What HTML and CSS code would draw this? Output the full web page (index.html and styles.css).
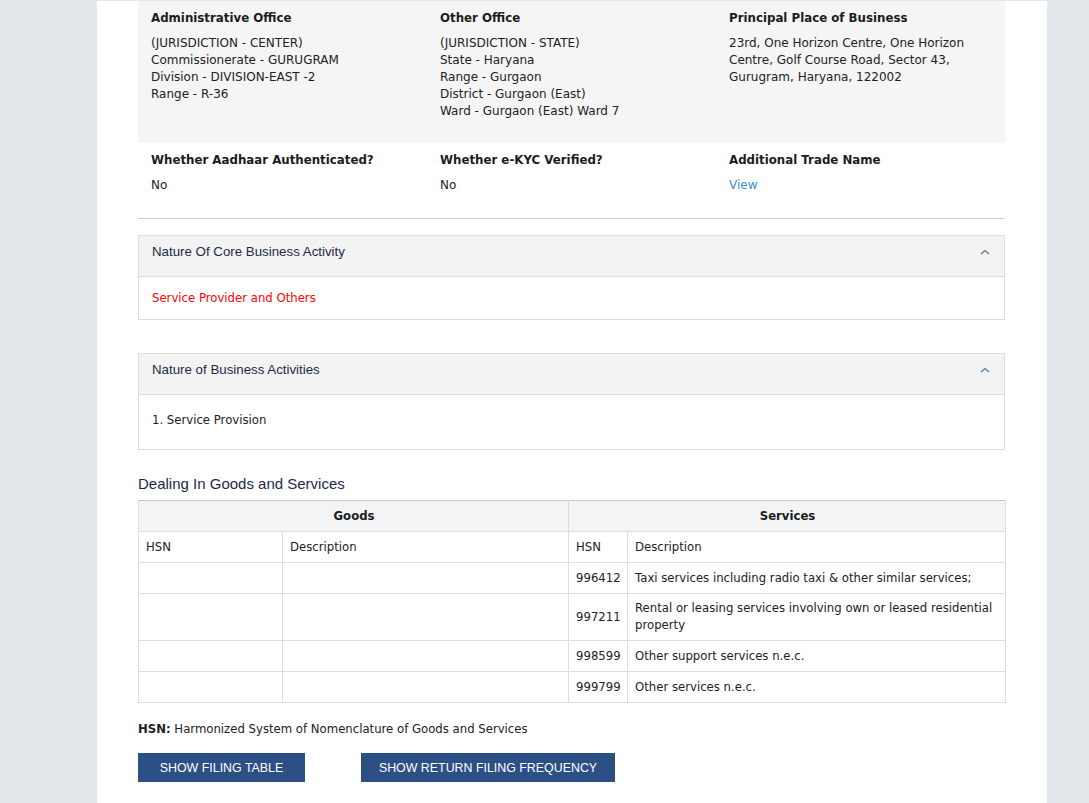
FILE: index.html
```html
<!DOCTYPE html>
<html>
<head>
<meta charset="utf-8">
<link rel="stylesheet" href="styles.css">
</head>
<body>
<div class="page">
  <div class="content">
    <div class="info-grid shaded">
      <div class="cell">
        <div class="label">Administrative Office</div>
        <div class="value">(JURISDICTION - CENTER)<br>Commissionerate - GURUGRAM<br>Division - DIVISION-EAST -2<br>Range - R-36</div>
      </div>
      <div class="cell">
        <div class="label">Other Office</div>
        <div class="value">(JURISDICTION - STATE)<br>State - Haryana<br>Range - Gurgaon<br>District - Gurgaon (East)<br>Ward - Gurgaon (East) Ward 7</div>
      </div>
      <div class="cell">
        <div class="label">Principal Place of Business</div>
        <div class="value">23rd, One Horizon Centre, One Horizon Centre, Golf Course Road, Sector 43, Gurugram, Haryana, 122002</div>
      </div>
    </div>
    <div class="info-grid plain">
      <div class="cell">
        <div class="label">Whether Aadhaar Authenticated?</div>
        <div class="value">No</div>
      </div>
      <div class="cell">
        <div class="label">Whether e-KYC Verified?</div>
        <div class="value">No</div>
      </div>
      <div class="cell">
        <div class="label">Additional Trade Name</div>
        <div class="value"><a class="link" href="#">View</a></div>
      </div>
    </div>

    <div class="panel first">
      <div class="panel-head">
        <span>Nature Of Core Business Activity</span>
        <svg class="chev" width="10" height="6" viewBox="0 0 10 6"><polyline points="1,5 5,1.5 9,5" fill="none" stroke="#6b6f80" stroke-width="1.3"/></svg>
      </div>
      <div class="panel-body red">Service Provider and Others</div>
    </div>

    <div class="panel second">
      <div class="panel-head">
        <span>Nature of Business Activities</span>
        <svg class="chev" width="10" height="6" viewBox="0 0 10 6"><polyline points="1,5 5,1.5 9,5" fill="none" stroke="#4d7ab0" stroke-width="1.3"/></svg>
      </div>
      <div class="panel-body tall">1. Service Provision</div>
    </div>

    <h3 class="section-title">Dealing In Goods and Services</h3>
    <table class="hsn-table">
      <colgroup>
        <col class="c1"><col class="c2"><col class="c3"><col class="c4">
      </colgroup>
      <thead>
        <tr class="group-row"><th colspan="2">Goods</th><th colspan="2">Services</th></tr>
      </thead>
      <tbody>
        <tr><td>HSN</td><td>Description</td><td>HSN</td><td>Description</td></tr>
        <tr><td></td><td></td><td>996412</td><td>Taxi services including radio taxi &amp; other similar services;</td></tr>
        <tr><td></td><td></td><td>997211</td><td>Rental or leasing services involving own or leased residential property</td></tr>
        <tr><td></td><td></td><td>998599</td><td>Other support services n.e.c.</td></tr>
        <tr><td></td><td></td><td>999799</td><td>Other services n.e.c.</td></tr>
      </tbody>
    </table>

    <p class="note"><b>HSN:</b> Harmonized System of Nomenclature of Goods and Services</p>

    <div class="actions">
      <button class="btn btn-a">SHOW FILING TABLE</button>
      <button class="btn btn-b">SHOW RETURN FILING FREQUENCY</button>
    </div>
  </div>
</div>
</body>
</html>
```

FILE: styles.css
```css
html, body {
  margin: 0;
  padding: 0;
}
body {
  background: #e4e7eb;
  font-family: "DejaVu Sans", Verdana, sans-serif;
  font-size: 11.7px;
  color: #222;
}
.page {
  width: 950px;
  margin-left: 97px;
  background: #fff;
  min-height: 803px;
}
.content {
  padding: 0 42px 0 41px;
}
.info-grid {
  display: grid;
  grid-template-columns: 289px 289px 289px;
}
.shaded {
  background: #f5f5f5;
  height: 142px;
  margin-top: 1px;
}
.plain {
  height: 75px;
  border-bottom: 1px solid #cfcfcf;
}
.cell {
  padding: 9px 26px 0 13px;
}
.label {
  font-weight: bold;
  font-size: 11.8px;
  color: #1c1c1c;
  line-height: 16px;
  margin-bottom: 9px;
}
.value {
  line-height: 17px;
  color: #222;
  font-size: 12px;
}
.link {
  color: #3a8fd0;
  text-decoration: none;
}
.panel {
  border: 1px solid #dcdcdc;
}
.panel.first {
  margin-top: 16px;
}
.panel.second {
  margin-top: 33px;
}
.panel-head {
  background: #f3f3f3;
  height: 41px;
  border-bottom: 1px solid #dcdcdc;
  display: flex;
  align-items: center;
  justify-content: space-between;
  padding: 0 13px 10px 13px;
  box-sizing: border-box;
  font-family: "Liberation Sans", Arial, sans-serif;
  font-size: 13.3px;
  color: #1e2a45;
}
.chev {
  margin-right: 1px;
  margin-top: 2px;
}
.panel-body {
  height: 42px;
  display: flex;
  align-items: center;
  padding: 0 13px;
}
.panel-body.red {
  color: #ff0000;
}
.panel-body.tall {
  height: 54px;
  padding-bottom: 4px;
  box-sizing: border-box;
}
.section-title {
  font-family: "Liberation Sans", Arial, sans-serif;
  font-weight: normal;
  font-size: 15px;
  color: #1c2a48;
  margin: 25px 0 7px 0;
  line-height: 18px;
}
.hsn-table {
  width: 867px;
  border-collapse: collapse;
  table-layout: fixed;
}
.c1 { width: 144px; }
.c2 { width: 286px; }
.c3 { width: 59px; }
.c4 { width: 378px; }
.hsn-table th, .hsn-table td {
  border: 1px solid #dddddd;
  padding: 6px 6px 6px 7px;
  height: 18px;
  text-align: left;
  line-height: 17px;
  color: #222;
}
.group-row th {
  background: #f3f4f6;
  text-align: center;
  font-weight: bold;
  border-top-color: #c8c8c8;
  color: #1c1c1c;
}
.note {
  margin: 18px 0 0 0;
  line-height: 16px;
  color: #222;
}
.actions {
  display: flex;
  gap: 56px;
  margin-top: 16px;
}
.btn {
  background: #2c4f86;
  color: #fff;
  border: none;
  height: 29px;
  font-family: "Liberation Sans", Arial, sans-serif;
  font-size: 12.4px;
  padding: 0;
  cursor: pointer;
}
.btn-a { width: 167px; }
.btn-b { width: 254px; }
```
